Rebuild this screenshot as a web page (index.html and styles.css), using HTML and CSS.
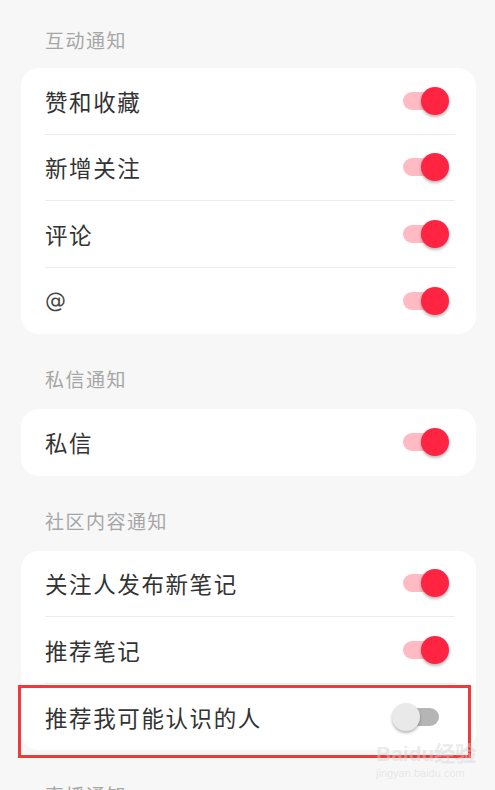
FILE: index.html
```html
<!DOCTYPE html>
<html lang="zh-CN">
<head>
<meta charset="utf-8">
<title>通知设置</title>
<link rel="stylesheet" href="styles.css">
</head>
<body>
<div class="page">
  <div class="section-title first">互动通知</div>
  <div class="card">
    <div class="row"><span class="label">赞和收藏</span><span class="switch on"><span class="knob"></span></span></div>
    <div class="row"><span class="label">新增关注</span><span class="switch on"><span class="knob"></span></span></div>
    <div class="row"><span class="label">评论</span><span class="switch on"><span class="knob"></span></span></div>
    <div class="row"><span class="label at">@</span><span class="switch on"><span class="knob"></span></span></div>
  </div>

  <div class="section-title">私信通知</div>
  <div class="card">
    <div class="row"><span class="label">私信</span><span class="switch on"><span class="knob"></span></span></div>
  </div>

  <div class="section-title">社区内容通知</div>
  <div class="card">
    <div class="row"><span class="label">关注人发布新笔记</span><span class="switch on"><span class="knob"></span></span></div>
    <div class="row"><span class="label">推荐笔记</span><span class="switch on"><span class="knob"></span></span></div>
    <div class="row highlighted"><span class="label">推荐我可能认识的人</span><span class="switch off"><span class="knob"></span></span></div>
  </div>

  <div class="section-title">直播通知</div>
</div>
<div class="watermark"><span class="wm-big">Baidu经验</span><span class="wm-small">jingyan.baidu.com</span></div>
</body>
</html>
```
FILE: styles.css
```css
html, body {
  margin: 0;
  padding: 0;
  background: #f7f7f7;
  overflow: hidden;
  height: 790px;
}
body {
  font-family: "Noto Sans CJK SC", "Noto Sans", sans-serif;
  position: relative;
}
.page {
  padding: 0 19px 0 21px;
}
.section-title {
  box-sizing: border-box;
  height: 75px;
  padding: 33px 0 0 24px;
  font-size: 19px;
  line-height: 24px;
  letter-spacing: 1.5px;
  color: #a6a6a6;
}
.section-title.first {
  height: 68px;
  padding-top: 28px;
}
.card {
  background: #ffffff;
  border-radius: 18px;
}
.row {
  position: relative;
  box-sizing: border-box;
  height: 66.5px;
  margin: 0 21px 0 24px;
  display: flex;
  align-items: center;
  justify-content: space-between;
  border-bottom: 1px solid #ececec;
}
.row:last-child {
  border-bottom: none;
}
.label {
  font-size: 22.5px;
  letter-spacing: 1.6px;
  color: #333333;
}
.label.at {
  font-family: "DejaVu Sans", sans-serif;
  font-size: 21px;
  color: #444;
}
.switch {
  position: relative;
  width: 37px;
  height: 18px;
  margin-right: 15px;
  border-radius: 9px;
}
.switch.on {
  background: #ffbac4;
}
.switch.off {
  background: #b5b5b5;
  margin-right: 16px;
}
.knob {
  position: absolute;
  top: -5px;
  width: 28px;
  height: 28px;
  border-radius: 50%;
  box-shadow: 0 2px 3px rgba(0, 0, 0, 0.28);
}
.switch.on .knob {
  left: 18px;
  background: #ff2442;
}
.switch.off .knob {
  left: -10px;
  background: #e9e9e9;
}
.highlighted::after {
  content: "";
  position: absolute;
  left: -27px;
  right: -16px;
  top: 1px;
  bottom: -7.5px;
  border: 3px solid #f03a3a;
  pointer-events: none;
}
.watermark {
  position: absolute;
  left: 376px;
  top: 742px;
  display: flex;
  flex-direction: column;
  align-items: flex-start;
  color: rgba(210, 210, 210, 0.45);
  font-family: "Liberation Sans", sans-serif;
  pointer-events: none;
}
.wm-big {
  font-size: 21px;
  font-weight: bold;
  line-height: 24px;
}
.wm-small {
  font-size: 11px;
  line-height: 14px;
}
```
